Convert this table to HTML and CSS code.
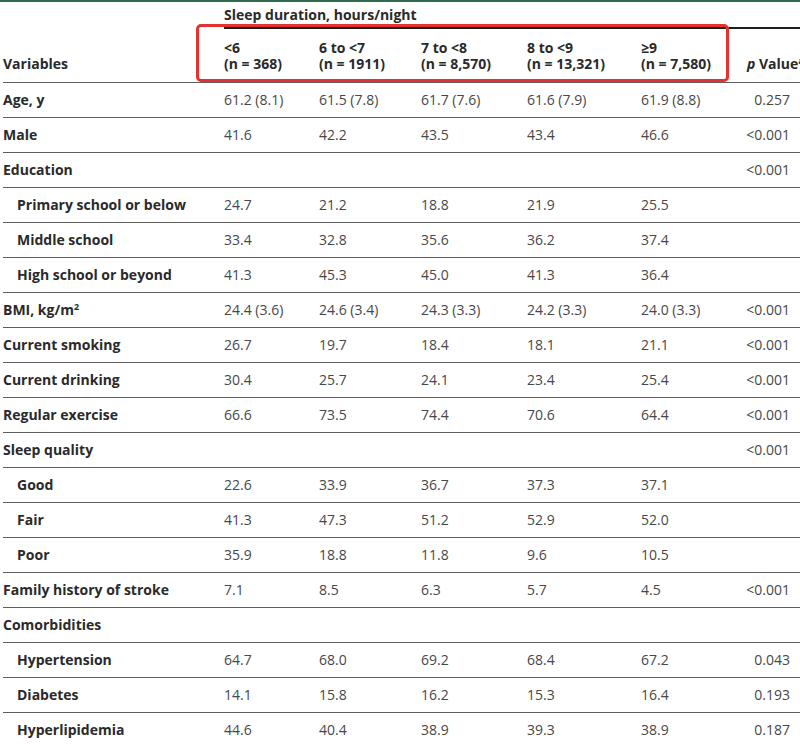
FILE: index.html
```html
<!DOCTYPE html>
<html lang="en">
<head>
<meta charset="utf-8">
<title>Sleep duration table</title>
<link rel="stylesheet" href="styles.css">
</head>
<body>
<div class="topbar"></div>
<div class="wrap">
  <table class="tbl">
    <colgroup>
      <col class="c-label"><col class="c1"><col class="c2"><col class="c3"><col class="c4"><col class="c5"><col class="cp">
    </colgroup>
    <thead>
      <tr class="hr1">
        <th class="blank"></th>
        <th class="span" colspan="6">Sleep duration, hours/night</th>
      </tr>
      <tr class="hr2">
        <th class="lab">Variables</th>
        <th><span class="ln">&lt;6</span><span class="ln">(n = 368)</span></th>
        <th><span class="ln">6 to &lt;7</span><span class="ln">(n = 1911)</span></th>
        <th><span class="ln">7 to &lt;8</span><span class="ln">(n = 8,570)</span></th>
        <th><span class="ln">8 to &lt;9</span><span class="ln">(n = 13,321)</span></th>
        <th><span class="ln">≥9</span><span class="ln">(n = 7,580)</span></th>
        <th class="ph"><i>p</i> Value<sup>a</sup></th>
      </tr>
    </thead>
    <tbody>
      <tr><td class="lab">Age, y</td><td>61.2 (8.1)</td><td>61.5 (7.8)</td><td>61.7 (7.6)</td><td>61.6 (7.9)</td><td>61.9 (8.8)</td><td class="p">0.257</td></tr>
      <tr><td class="lab">Male</td><td>41.6</td><td>42.2</td><td>43.5</td><td>43.4</td><td>46.6</td><td class="p">&lt;0.001</td></tr>
      <tr><td class="lab">Education</td><td></td><td></td><td></td><td></td><td></td><td class="p">&lt;0.001</td></tr>
      <tr><td class="lab sub">Primary school or below</td><td>24.7</td><td>21.2</td><td>18.8</td><td>21.9</td><td>25.5</td><td class="p"></td></tr>
      <tr><td class="lab sub">Middle school</td><td>33.4</td><td>32.8</td><td>35.6</td><td>36.2</td><td>37.4</td><td class="p"></td></tr>
      <tr><td class="lab sub">High school or beyond</td><td>41.3</td><td>45.3</td><td>45.0</td><td>41.3</td><td>36.4</td><td class="p"></td></tr>
      <tr><td class="lab">BMI, kg/m<sup>2</sup></td><td>24.4 (3.6)</td><td>24.6 (3.4)</td><td>24.3 (3.3)</td><td>24.2 (3.3)</td><td>24.0 (3.3)</td><td class="p">&lt;0.001</td></tr>
      <tr><td class="lab">Current smoking</td><td>26.7</td><td>19.7</td><td>18.4</td><td>18.1</td><td>21.1</td><td class="p">&lt;0.001</td></tr>
      <tr><td class="lab">Current drinking</td><td>30.4</td><td>25.7</td><td>24.1</td><td>23.4</td><td>25.4</td><td class="p">&lt;0.001</td></tr>
      <tr><td class="lab">Regular exercise</td><td>66.6</td><td>73.5</td><td>74.4</td><td>70.6</td><td>64.4</td><td class="p">&lt;0.001</td></tr>
      <tr><td class="lab">Sleep quality</td><td></td><td></td><td></td><td></td><td></td><td class="p">&lt;0.001</td></tr>
      <tr><td class="lab sub">Good</td><td>22.6</td><td>33.9</td><td>36.7</td><td>37.3</td><td>37.1</td><td class="p"></td></tr>
      <tr><td class="lab sub">Fair</td><td>41.3</td><td>47.3</td><td>51.2</td><td>52.9</td><td>52.0</td><td class="p"></td></tr>
      <tr><td class="lab sub">Poor</td><td>35.9</td><td>18.8</td><td>11.8</td><td>9.6</td><td>10.5</td><td class="p"></td></tr>
      <tr><td class="lab">Family history of stroke</td><td>7.1</td><td>8.5</td><td>6.3</td><td>5.7</td><td>4.5</td><td class="p">&lt;0.001</td></tr>
      <tr><td class="lab">Comorbidities</td><td></td><td></td><td></td><td></td><td></td><td class="p"></td></tr>
      <tr><td class="lab sub">Hypertension</td><td>64.7</td><td>68.0</td><td>69.2</td><td>68.4</td><td>67.2</td><td class="p">0.043</td></tr>
      <tr><td class="lab sub">Diabetes</td><td>14.1</td><td>15.8</td><td>16.2</td><td>15.3</td><td>16.4</td><td class="p">0.193</td></tr>
      <tr><td class="lab sub">Hyperlipidemia</td><td>44.6</td><td>40.4</td><td>38.9</td><td>39.3</td><td>38.9</td><td class="p">0.187</td></tr>
    </tbody>
  </table>
  <div class="highlight"></div>
</div>
</body>
</html>
```

FILE: styles.css
```css
html, body {
  margin: 0;
  padding: 0;
  background: #ffffff;
  overflow: hidden;
}
body {
  width: 800px;
  height: 746px;
  font-family: "Open Sans", "Noto Sans", "DejaVu Sans", sans-serif;
  font-size: 14px;
  color: #474747;
}
.topbar {
  height: 2px;
  background: #2f6b4f;
}
.wrap {
  position: relative;
  width: 830px;
  margin-left: 3px;
}
.tbl {
  border-collapse: collapse;
  table-layout: fixed;
  width: 830px;
}
.c-label { width: 221px; }
.c1 { width: 95px; }
.c2 { width: 102px; }
.c3 { width: 106px; }
.c4 { width: 114px; }
.c5 { width: 99px; }
.cp { width: 93px; }

th, td {
  padding: 0;
  text-align: left;
  font-weight: normal;
  line-height: 16px;
}
th {
  font-weight: 700;
  color: #2a2a2a;
}
.ln {
  display: block;
  line-height: 16px;
}
.hr1 th {
  height: 25px;
  vertical-align: middle;
}
.hr1 .span {
  border-bottom: 2px solid #1e1e1e;
}
.hr2 th {
  height: 43px;
  vertical-align: bottom;
  padding-bottom: 10px;
  border-bottom: 1px solid #5e5e5e;
}
.hr2 .ph {
  padding-left: 7px;
}
.ph i {
  font-style: italic;
}
sup {
  font-size: 9px;
  line-height: 0;
  vertical-align: 5px;
}
tbody td {
  height: 34px;
  border-bottom: 1px solid #5e5e5e;
  vertical-align: middle;
}
td.lab {
  font-weight: 700;
  color: #2a2a2a;
}
td.sub {
  padding-left: 14px;
}
td.p {
  text-align: right;
  padding-right: 43px;
}
.highlight {
  position: absolute;
  left: 193px;
  top: 22px;
  width: 527px;
  height: 52px;
  border: 3px solid #e23232;
  border-radius: 5px;
  pointer-events: none;
}
```
